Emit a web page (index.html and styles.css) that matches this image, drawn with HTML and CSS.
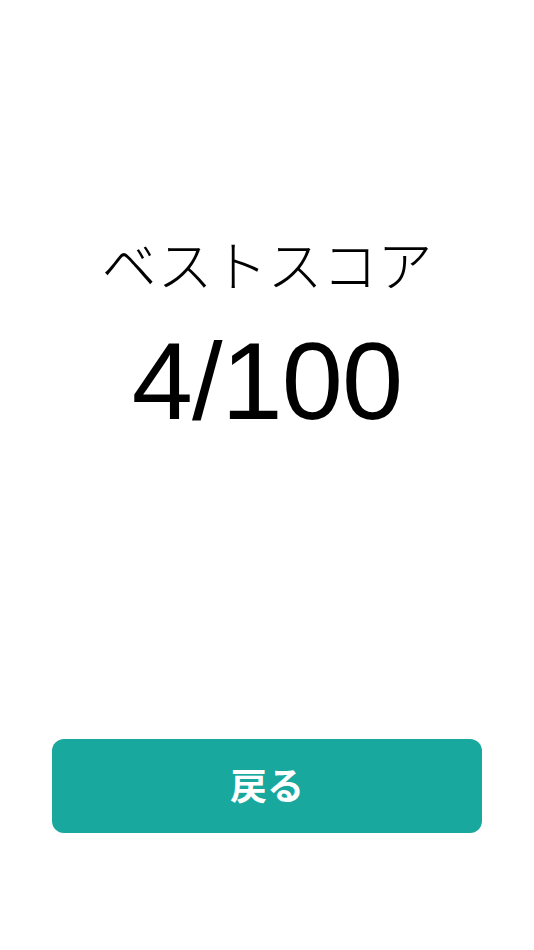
FILE: index.html
```html
<!DOCTYPE html>
<html lang="ja">
<head>
    <meta charset="UTF-8">
    <title>ベストスコア</title>
    <link rel="stylesheet" href="styles.css">
</head>
<body>
    <div class="screen">
        <div class="score-box">
            <div class="score-title">ベストスコア</div>
            <div class="score-value">4/100</div>
        </div>
        <button class="back-btn">戻る</button>
    </div>
</body>
</html>
```

FILE: styles.css
```css
html, body {
    margin: 0;
    padding: 0;
    background: #ffffff;
}

body {
    font-family: "Noto Sans CJK JP", "Noto Sans", sans-serif;
    color: #000000;
}

.screen {
    height: 950px;
    display: flex;
    flex-direction: column;
    align-items: center;
    box-sizing: border-box;
    padding: 225px 52px 117px;
}

.score-box {
    flex: 1;
    display: flex;
    flex-direction: column;
    align-items: center;
}

.score-title {
    font-size: 55px;
    font-weight: 300;
    line-height: 74px;
}

.score-value {
    font-family: "Liberation Sans", sans-serif;
    font-size: 110px;
    font-weight: 400;
    line-height: 150px;
    letter-spacing: -1px;
    margin-top: 7px;
}

.back-btn {
    width: 100%;
    height: 94px;
    padding: 0 0 4px;
    border: none;
    border-radius: 12px;
    background: #18a89e;
    color: #ffffff;
    font-family: "Noto Sans CJK JP", sans-serif;
    font-size: 37px;
    font-weight: 700;
    cursor: pointer;
}
```
